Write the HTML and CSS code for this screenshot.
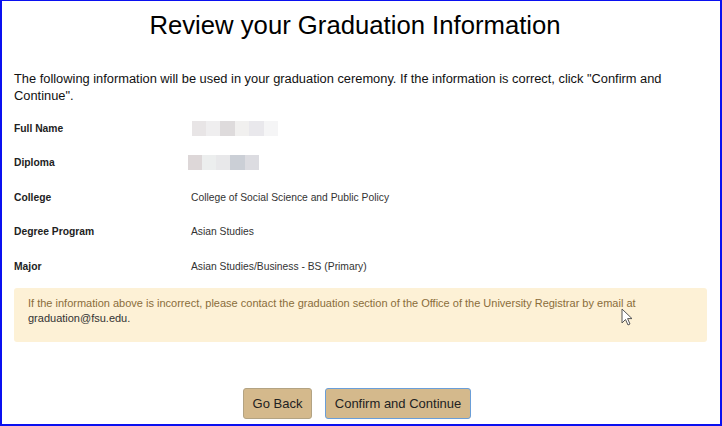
FILE: index.html
```html
<!DOCTYPE html>
<html lang="en">
<head>
<meta charset="utf-8">
<title>Review your Graduation Information</title>
<link rel="stylesheet" href="styles.css">
</head>
<body>
<div class="frame">
  <h1 class="title">Review your Graduation Information</h1>
  <p class="intro">The following information will be used in your graduation ceremony. If the information is correct, click "Confirm and Continue".</p>
  <div class="info">
    <div class="label">Full Name</div>
    <div class="value"><span class="blur blur-name"><i class="c1"></i><i class="c2"></i><i class="c3"></i><i class="c4"></i><i class="c5"></i><i class="c6"></i></span></div>
    <div class="label">Diploma</div>
    <div class="value"><span class="blur blur-diploma"><i class="d1"></i><i class="d2"></i><i class="d3"></i><i class="d4"></i><i class="d5"></i></span></div>
    <div class="label">College</div>
    <div class="value">College of Social Science and Public Policy</div>
    <div class="label">Degree Program</div>
    <div class="value">Asian Studies</div>
    <div class="label">Major</div>
    <div class="value">Asian Studies/Business - BS (Primary)</div>
  </div>
  <div class="alert">
    <span class="alert-main">If the information above is incorrect, please contact the graduation section of the Office of the University Registrar by email at</span>
    <span class="alert-mail">graduation@fsu.edu.</span>
    <svg class="cursor" width="12" height="18" viewBox="0 0 12 18"><path d="M1 1 L1 15 L4.5 11.5 L7 17 L9 16 L6.6 10.6 L11 10.6 Z" fill="#fff" stroke="#555" stroke-width="1"/></svg>
  </div>
  <div class="actions">
    <button class="btn btn-back">Go Back</button>
    <button class="btn btn-confirm">Confirm and Continue</button>
  </div>
</div>
</body>
</html>
```
FILE: styles.css
```css
* { box-sizing: border-box; }
html, body { margin: 0; padding: 0; background: #fff; }
body { font-family: "Liberation Sans", Arial, sans-serif; color: #111; }
.frame {
  width: 722px;
  height: 426px;
  border-left: 2px solid #0a10f0;
  border-right: 2px solid #0a10f0;
  border-top: 1px solid #0a10f0;
  border-bottom: 2px solid #0a10f0;
  padding: 0 12px 0 12px;
  overflow: hidden;
}
.title {
  font-size: 25.7px;
  font-weight: normal;
  text-align: center;
  margin: 9px 0 0 0;
  padding-right: 12px;
  line-height: 30px;
  color: #000;
}
.intro {
  font-size: 12.85px;
  line-height: 17px;
  margin: 30px 0 0 0;
  color: #111;
}
.info {
  display: grid;
  grid-template-columns: 177px 1fr;
  grid-auto-rows: 34.5px;
  margin-top: 7px;
  font-size: 10.3px;
  align-items: center;
}
.label { font-weight: bold; color: #222; }
.value { color: #333; }
.blur { display: inline-flex; height: 15px; vertical-align: middle; }
.blur i { display: block; height: 15px; }
.blur-name { margin-left: 1px; }
.blur-name .c1 { width: 14px; background: #e8e5e6; }
.blur-name .c2 { width: 14px; background: #efeeef; }
.blur-name .c3 { width: 15px; background: #dedbdc; }
.blur-name .c4 { width: 14px; background: #f1f0ef; }
.blur-name .c5 { width: 15px; background: #e9e8ec; }
.blur-name .c6 { width: 14px; background: #f5f5f6; }
.blur-diploma { margin-left: -3px; }
.blur-diploma .d1 { width: 14px; background: #ddd7d8; }
.blur-diploma .d2 { width: 14px; background: #eceeee; }
.blur-diploma .d3 { width: 14px; background: #e8e8ea; }
.blur-diploma .d4 { width: 15px; background: #cbcfd6; }
.blur-diploma .d5 { width: 14px; background: #dcdce1; }
.alert {
  position: relative;
  margin-top: 4px;
  margin-right: 1px;
  background: #fdf1d6;
  border-radius: 3px;
  padding: 8px 14px 16px 14px;
  font-size: 11px;
  line-height: 15px;
  color: #8a6d3b;
  height: 54px;
}
.alert-mail { color: #333; }
.cursor { position: absolute; left: 607px; top: 20px; }
.actions {
  display: flex;
  justify-content: center;
  gap: 13px;
  margin-top: 46px;
  padding-right: 8px;
}
.btn {
  font-family: "Liberation Sans", Arial, sans-serif;
  font-size: 13px;
  color: #222;
  background: #d4b98c;
  border: 1px solid #b3a383;
  border-radius: 3px;
  height: 31px;
  padding: 0;
}
.btn-back { width: 69px; }
.btn-confirm { width: 146px; border-color: #6a9ed8; }
```
